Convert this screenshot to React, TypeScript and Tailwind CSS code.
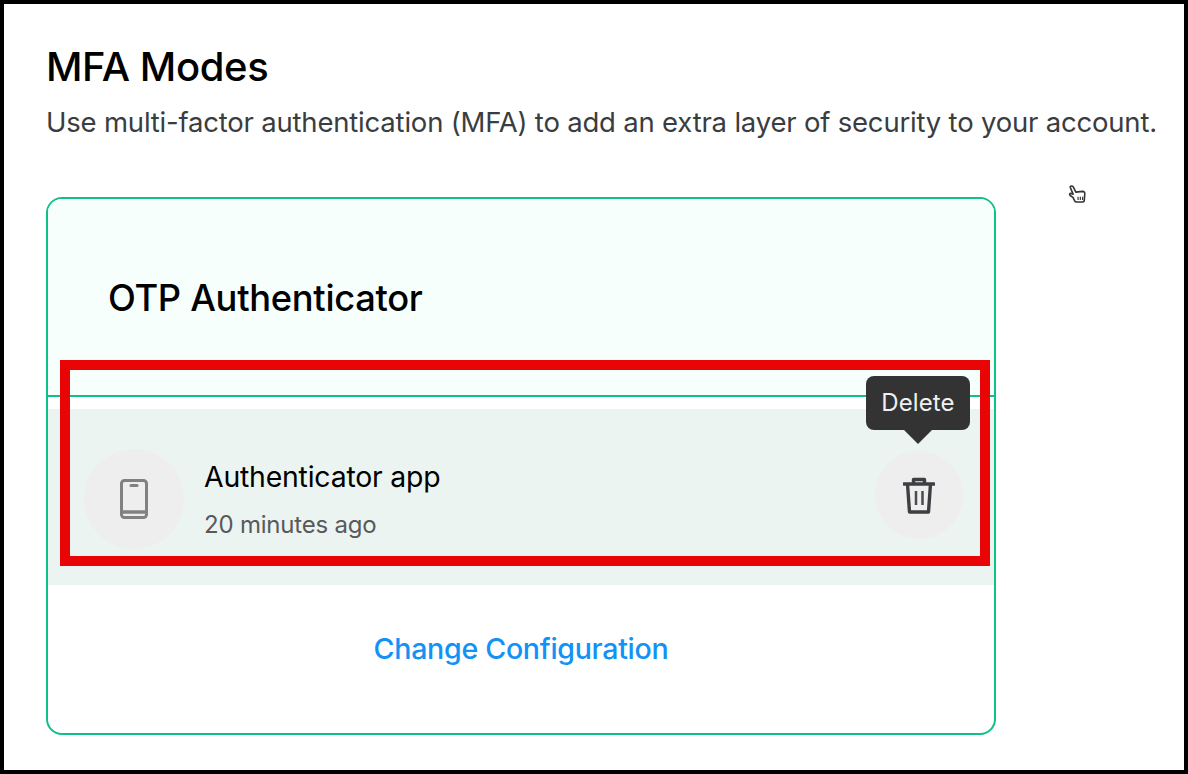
export default function App() {
  return (
    <div className="relative h-[774px] w-[1188px] overflow-hidden border-4 border-black bg-white pl-[42px] font-['Inter',sans-serif]">
      <h1 className="mt-[40px] text-[40px] font-medium leading-[46px] tracking-[-0.4px] text-black">MFA Modes</h1>
      <p className="mt-[16px] whitespace-nowrap text-[27.5px] leading-[32px] tracking-[-0.2px] text-[#3a3d40]">
        Use multi-factor authentication (MFA) to add an extra layer of security to your account.
      </p>
      <div className="mt-[59px] flex h-[538px] w-[950px] flex-col overflow-hidden rounded-[16px] border-2 border-[#0fc08a]">
        <div className="flex h-[198px] items-start border-b-2 border-[#0fc08a] bg-[#f6fffc] pl-[60px] pt-[76px]">
          <h2 className="text-[36.3px] font-medium leading-[46px] tracking-[-0.3px] text-black">OTP Authenticator</h2>
        </div>
        <div className="mt-[12px] flex h-[176px] items-start bg-[#ebf4f1] pl-[36px] pr-[31px]">
          <div className="mt-[40px] flex h-[100px] w-[100px] items-center justify-center rounded-full bg-[#eeeeee]">
            <svg width="28" height="40" viewBox="0 0 28 40" fill="none">
              <rect x="1.5" y="1.5" width="25" height="37" rx="3" stroke="#808282" strokeWidth="3" />
              <path d="M2 33h24" stroke="#808282" strokeWidth="3.5" />
              <path d="M11 6.5h6" stroke="#808282" strokeWidth="3" strokeLinecap="round" />
            </svg>
          </div>
          <div className="ml-[20px] mt-[50px] flex-1">
            <div className="text-[28.4px] leading-[36px] tracking-[-0.2px] text-black">Authenticator app</div>
            <div className="mt-[16px] text-[24px] leading-[28px] tracking-[-0.2px] text-[#58595b]">20 minutes ago</div>
          </div>
          <div className="mt-[42px] flex h-[88px] w-[88px] items-center justify-center rounded-full bg-[#eeeeee]">
            <svg width="32" height="37" viewBox="0 0 32 37" fill="none" stroke="#3d3f42" strokeWidth="3.4" strokeLinejoin="round">
              <path d="M1 7h30" strokeLinecap="round" />
              <path d="M10.5 7V2.5h11V7" />
              <path d="M4.5 7l2 28h19l2-28" />
              <path d="M13 14v14M19.5 14v14" strokeWidth="2.5" stroke="#4a4c50" />
            </svg>
          </div>
        </div>
        <div className="flex flex-1 items-start justify-center pt-[46px]">
          <a className="text-[28.6px] font-medium leading-[36px] tracking-[-0.3px] text-[#1292f5]">Change Configuration</a>
        </div>
      </div>
      <div className="absolute left-[56px] top-[356px] h-[206px] w-[930px] border-[10px] border-[#e90505]" />
      <div className="absolute left-[862px] top-[372px] flex h-[54px] w-[104px] items-center justify-center rounded-[8px] bg-[#333333] text-[24px] tracking-[0.1px] text-[#f0f0f0]">
        Delete
        <div className="absolute left-[38px] top-[54px] h-0 w-0 border-x-[14px] border-t-[14px] border-x-transparent border-t-[#333333]" />
      </div>
      <svg className="absolute left-[1062px] top-[179px]" width="23" height="25" viewBox="0 0 20 22" fill="#fff" stroke="#333" strokeWidth="1.4" strokeLinejoin="round">
        <path d="M3.5 3.5c.8-1.400 2.400-.9 3 .3l2 4.200 6-.6c1.500.1 2 1.200 1.900 2.300l-.4 5.300c0 1.200-.7 1.700-1.500 1.700H9c-.8 0-1.200-.4-1.500-1L6 12.600 3.500 11c-.9-.8-.3-2 .7-1.800l1.900.6z" />
        <path d="M10.500 12v3M12.500 12v3M14.500 12v3" strokeWidth="1" />
      </svg>
    </div>
  );
}
